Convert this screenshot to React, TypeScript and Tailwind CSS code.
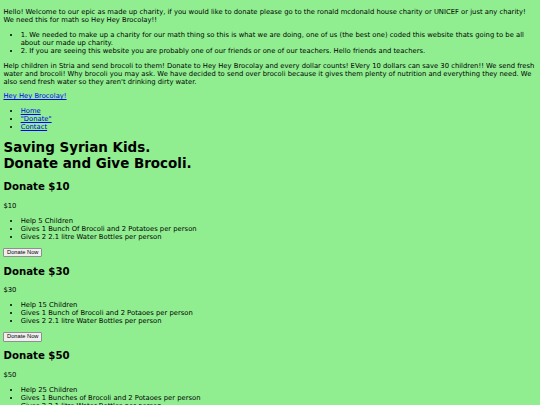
const donations = [
  { amount: "$10", perks: ["Help 5 Children", "Gives 1 Bunch Of Brocoli and 2 Potatoes per person", "Gives 2 2.1 litre Water Bottles per person"] },
  { amount: "$30", perks: ["Help 15 Children", "Gives 1 Bunch of Brocoli and 2 Potaoes per person", "Gives 2 2.1 litre Water Bottles per person"] },
  { amount: "$50", perks: ["Help 25 Children", "Gives 1 Bunches of Brocoli and 2 Potaoes per person", "Gives 2 2.1 litre Water Bottles per person"] },
];

function Bullets({ items, links }: { items: string[]; links?: boolean }) {
  return (
    <ul className="my-[1em] list-disc pl-[2.53em]">
      {items.map((item) => (
        <li key={item}>
          {links ? <a href="#" className="text-[#0000ee] underline">{item}</a> : item}
        </li>
      ))}
    </ul>
  );
}

export default function App() {
  return (
    <div className="min-h-[405px] bg-[#90ee90] px-[3.44px] py-px font-['DejaVu_Sans',Verdana,sans-serif] text-[6.8px] leading-[1.178] text-black">
      <p className="my-[1.01em]">
        Hello! Welcome to our epic as made up charity, if you would like to donate please go to the ronald mcdonald house charity or UNICEF or just any charity! We need this for math so Hey Hey Brocolay!!
      </p>
      <Bullets
        items={[
          "1. We needed to make up a charity for our math thing so this is what we are doing, one of us (the best one) coded this website thats going to be all about our made up charity.",
          "2. If you are seeing this website you are probably one of our friends or one of our teachers. Hello friends and teachers.",
        ]}
      />
      <p className="my-[1.01em]">
        Help children in Stria and send brocoli to them! Donate to Hey Hey Brocolay and every dollar counts! EVery 10 dollars can save 30 children!! We send fresh water and brocoli! Why brocoli you may ask. We have decided to send over brocoli because it gives them plenty of nutrition and everything they need. We also send fresh water so they aren't drinking dirty water.
      </p>
      <div>
        <a href="#" className="text-[#0000ee] underline">Hey Hey Brocolay!</a>
      </div>
      <Bullets items={["Home", "\"Donate\"", "Contact"]} links />
      <h1 className="my-[0.68em] text-[1.98em] font-bold">
        Saving Syrian Kids.
        <br />
        Donate and Give Brocoli.
      </h1>
      {donations.map((d) => (
        <section key={d.amount}>
          <h2 className="my-[0.84em] text-[1.5em] font-bold">Donate {d.amount}</h2>
          <p className="my-[1.01em]">{d.amount}</p>
          <Bullets items={d.perks} />
          <p className="my-[1.01em]">
            <button className="rounded-[1px] border border-[#8f8f8f] bg-[#efefef] px-[2.6px] py-[0.5px] font-['Liberation_Sans',Arial,sans-serif] text-[5.73px] leading-[1.15] text-black">
              Donate Now
            </button>
          </p>
        </section>
      ))}
    </div>
  );
}
